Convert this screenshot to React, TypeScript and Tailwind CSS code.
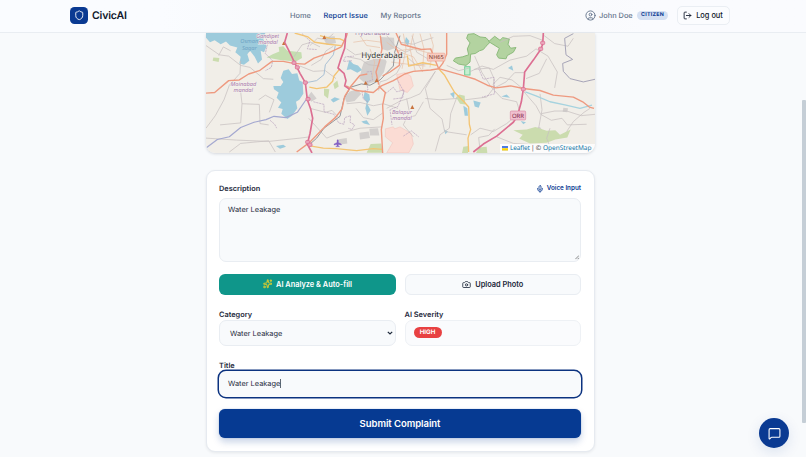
import { Camera, CircleUser, LogOut, MessageSquare, Mic, Shield, Sparkles } from "lucide-react";

const navItems = [
  { label: "Home", active: false },
  { label: "Report Issue", active: true },
  { label: "My Reports", active: false },
];

const lakes = [
  "M18 12H196L190 32L200 52L192 70L182 66L186 92L174 104L164 84L150 66L142 76L148 96L132 108L118 104L122 84L106 70L112 56L90 50L78 38L62 46L44 34L30 40L18 26Z",
  "M250 126L266 122L276 136L292 134L298 156L308 160L310 196L298 214L288 220L292 240L276 262L262 272L244 256L248 242L234 238L244 222L230 208L236 192L222 182L220 172L242 172L250 160L242 148Z",
  "M448 94L460 106L474 110L486 124L472 132L452 122L440 124Z",
  "M494 190L508 198L510 214L502 226L512 246L502 262L496 240L500 222L490 208Z",
  "M392 214L404 206L420 212L400 222Z",
  "M228 354L250 350L258 356L240 362Z",
  "M484 280L500 276L510 290L492 286Z",
  "M618 24L628 36L624 52L614 40Z",
  "M790 232L802 240L804 262L794 262Z",
  "M820 216L842 222L836 238L824 234Z",
  "M904 204L920 198L930 208Z",
  "M750 196L764 190L762 210Z",
  "M962 278L978 282L970 288Z",
  "M732 304L744 310L736 318Z",
  "M924 118L936 110L940 126Z",
];

const forests = [
  "M200 86L218 76L238 68L236 54L250 52L262 66L304 70L306 88L288 98L240 94Z",
  "M804 16L822 14L840 24L858 26L870 40L858 52L850 62L838 66L826 74L812 76L810 100L798 110L776 106L760 96L766 88L788 84L806 78L802 60L810 42L800 28Z",
  "M866 38L884 22L900 34L908 26L928 30L924 46L932 58L948 56L940 70L922 80L918 90L896 88L890 78L898 58L882 48Z",
];

const fields = [
  "M940 306L980 304L1006 296L1040 308L1066 306L1080 320L1112 304L1102 328L1066 334L1040 344L990 346L958 332L968 320Z",
  "M768 206L778 198L794 202L796 228L780 226Z",
  "M372 180L388 182L384 210L372 200Z",
  "M400 166L412 156L416 174L404 182Z",
  "M512 348L544 346L548 374H500Z",
  "M790 356L806 354L804 375H786Z",
  "M836 358L860 356L862 375H828Z",
  "M40 86L58 88L56 100L38 96Z",
];

const urban = [
  "M504 96L526 90L556 92L560 98L552 130L534 156L500 168L478 150L486 116L492 100Z",
  "M540 24L582 26L584 58L562 66L544 60Z",
  "M448 190L470 182L484 196L464 218L440 222L434 208Z",
  "M334 190L350 210L334 220L322 206Z",
  "M508 302L534 300L538 322L510 322Z",
  "M478 314L506 310L510 330L480 334Z",
  "M412 334L440 330L442 346L416 350Z",
  "M1004 300L1020 296L1028 308L1008 314Z",
  "M1090 238L1104 240L1102 252L1088 250Z",
  "M368 24L404 22L408 42L380 48Z",
];

const military = [
  "M590 138L614 132L632 142L640 172L622 192L600 184Z",
  "M556 302L580 296L584 302L600 296L634 316L640 348L626 375H560L578 344L556 326Z",
];

// Thin local streets around the city
const minorRoads = [
  "M18 50L58 78L86 82L122 110L150 116L190 150L220 152",
  "M18 300L46 262L72 214L88 170L120 134L122 96",
  "M56 80L70 54L92 66",
  "M122 190L126 226L178 228L180 286L206 290",
  "M60 290L122 284L126 226",
  "M18 330L110 336L206 340L300 330L330 326",
  "M88 372L122 346L206 338L226 372",
  "M208 252L222 214L196 200L176 214",
  "M330 240L376 252L396 246L418 270",
  "M326 270L380 330L410 318L480 300L546 296",
  "M334 110L364 92L378 66L400 52",
  "M300 112L340 128L376 126L408 150",
  "M282 84L306 48L332 40L360 54",
  "M440 226L480 222L520 232L550 226L594 240",
  "M468 240L490 268L520 274L548 254",
  "M560 240L600 218L632 208L660 196L706 128",
  "M620 210L628 250L610 290L640 326",
  "M706 128L676 180L690 240L726 272L734 310L800 320",
  "M770 208L752 256L748 300L720 320L706 370",
  "M796 214L860 206L880 180L882 150L868 118L822 122",
  "M808 130L846 112L880 122L930 94L980 82L1008 60",
  "M870 170L846 132L824 82",
  "M868 170L906 210L950 220L960 252L920 286L880 310L840 300L812 320",
  "M880 180L918 160L944 132L972 132",
  "M970 182L936 154L900 146L878 168",
  "M972 190L1008 232L1022 258L1054 276L1086 270L1102 290L1160 288",
  "M1020 196L1026 244L1016 300",
  "M1024 256L1064 248L1100 248L1144 262L1185 258",
  "M1100 310L1120 280L1152 252L1170 240",
  "M1008 60L1044 82L1072 130L1064 178",
  "M1030 18L1064 44L1104 52L1120 28",
  "M1040 90L1018 134L978 150",
  "M1050 300L1040 330L1056 372",
  "M884 302L866 322L836 328L840 366",
  "M890 326L940 346L1000 350L1060 364",
  "M670 220L646 262L614 270",
  "M676 210L720 214L770 210",
  "M900 40L940 22L990 20L1028 34",
  "M536 186L540 160L560 154L590 134L606 104",
  "M330 50L352 28L380 32L400 14",
  "M440 60L466 78L500 72L526 88",
  "M444 84L482 92L506 108L540 112",
  "M560 20L586 52L616 70L640 60",
  "M636 20L650 70L690 94L732 92",
  "M600 40L640 46L666 36L700 26",
  "M590 90L620 84L650 110L690 104",
  "M740 110L776 126L808 118",
];

const boundaries = [
  "M190 14L204 40L196 74L218 96L214 116L196 126",
  "M306 14L330 36L322 60L350 62",
  "M340 220L372 228L372 250L402 258L416 284L432 288L434 268L452 262L450 282L464 290L456 304L444 300",
  "M590 150L612 190L594 234L570 244L576 290",
  "M210 276L224 288L230 300",
  "M456 96L430 98L436 84L462 82",
  "M500 130L514 128L518 154L500 160L504 184L486 190L490 212L504 220",
  "M556 196L580 176L590 190L612 184L608 208L578 212",
  "M836 120L850 152L882 146L884 196L846 206",
  "M610 324L634 308L656 326",
];

// Dense inner-city streets
const cityRoads = [
  "M560 40L600 70L640 84L668 130",
  "M574 100L620 106L676 112",
  "M610 14L618 60L606 120",
  "M640 14L630 60L646 128",
  "M660 14L672 60L668 122",
  "M590 66L640 60L700 76",
  "M480 20L500 50L540 56",
  "M460 40L500 34L546 40",
  "M510 60L524 100L516 150",
  "M690 14L700 50L690 116",
];

const primaryRoads = [
  "M18 194L44 192L86 156L118 154L146 136L178 126L216 98L250 98L280 104L314 106L342 88L386 72L424 54",
  "M424 54L440 20L442 12",
  "M290 372L330 342L374 296L406 268L426 242L434 204L452 174L470 152L480 140L502 136",
  "M438 172L468 186L520 192L544 172L580 156L614 136L640 128L692 124L716 120",
  "M536 172L556 192L548 230L550 270L544 304L548 375",
  "M540 12L546 60L538 100L528 130L536 168",
  "M588 12L604 46L664 62L692 60L716 120",
  "M740 12V76L728 104L716 120",
  "M716 120L780 138L826 152L862 170L888 178L932 172L970 180L1020 186L1060 200L1120 206L1148 220L1168 236L1182 240",
  "M586 52L600 84L598 110L570 130L548 142",
];

const yellowRoads = [
  "M284 12L324 24L344 40L386 46L424 50",
  "M328 176L350 180L380 176L398 158L402 142L420 120",
  "M334 354L370 360L408 362L470 368L520 362L546 364",
  "M716 120L734 140L750 168L764 192L792 220L806 236L808 288L812 304L804 330L806 372",
  "M622 80L626 112L668 102L710 110",
  "M360 20L390 28L420 30L438 38",
];

const motorways = [
  "M262 12L254 40L270 72L284 102L300 134L316 162L322 214L332 242L338 270L330 316L322 348L336 375",
  "M438 12L434 58L422 92L414 118L432 134L438 156L434 172L448 182",
  "M1030 12L1028 46L1022 62L1000 94L974 130L970 182L964 220L952 264L940 282L890 324L850 348L820 372",
];

const junctions = [
  [282, 102],
  [292, 116],
  [316, 162],
  [324, 212],
  [323, 342],
  [330, 350],
  [1028, 42],
  [1022, 60],
  [970, 182],
];

function MapView() {
  return (
    <svg viewBox="18 12 1167 363" preserveAspectRatio="none" className="block h-full w-full" fill="none">
      <rect x="18" y="12" width="1167" height="363" fill="#f1eee8" />
      <g fill="#fbdcd4" stroke="#f0c0b8" strokeWidth="1.5">
        {military.map((d) => (
          <path key={d} d={d} />
        ))}
      </g>
      <g fill="#d3d0ce">
        {urban.map((d) => (
          <path key={d} d={d} />
        ))}
      </g>
      <g fill="#cbdcae">
        {fields.map((d) => (
          <path key={d} d={d} />
        ))}
      </g>
      <g fill="#b3d3a0" stroke="#8cba7c" strokeWidth="3" strokeLinejoin="round">
        {forests.map((d, i) => (
          <path key={d} d={d} strokeOpacity={i === 0 ? 0 : 1} fill={i === 0 ? "#c5deb0" : undefined} />
        ))}
      </g>
      <rect x="794" y="114" width="16" height="25" fill="#c5f0d0" stroke="#6fcf97" strokeWidth="3" />
      <g fill="#9dcbdc">
        {lakes.map((d) => (
          <path key={d} d={d} />
        ))}
      </g>
      <g stroke="#c6c0c0" strokeWidth="2.2" strokeLinejoin="round">
        {minorRoads.map((d) => (
          <path key={d} d={d} />
        ))}
      </g>
      <g stroke="#b9a3bd" strokeWidth="2" strokeDasharray="7 2">
        {boundaries.map((d) => (
          <path key={d} d={d} />
        ))}
      </g>
      <g stroke="#e6bfa6" strokeWidth="2" strokeLinejoin="round">
        {cityRoads.map((d) => (
          <path key={d} d={d} />
        ))}
      </g>
      {/* Rivers and railway */}
      <g strokeLinejoin="round">
        <path d="M18 360L52 334L88 326L122 298L162 282L198 274L222 264L258 268L292 252L318 214" stroke="#a4a8d0" strokeWidth="3.5" />
        <path d="M320 162L350 156L372 138L376 108L400 78L406 50" stroke="#a8bfd4" strokeWidth="3" />
        <path d="M976 190L1008 202L1050 220L1098 230L1140 240L1176 230" stroke="#a6d3df" strokeWidth="4" />
        <path d="M328 350L350 330L372 300L420 264L432 210L452 176L484 166L510 170L540 154L580 112L584 70L600 20" stroke="#909499" strokeWidth="3" />
        <path d="M1120 14L1094 28L1098 78L1118 92L1088 104L1090 128L1110 150L1150 160L1185 152" stroke="#a5a3b6" strokeWidth="3" />
      </g>
      <g stroke="#f3c473" strokeWidth="4" strokeLinejoin="round">
        {yellowRoads.map((d) => (
          <path key={d} d={d} />
        ))}
      </g>
      <g stroke="#ee9a80" strokeWidth="4.2" strokeLinejoin="round">
        {primaryRoads.map((d) => (
          <path key={d} d={d} />
        ))}
      </g>
      <g stroke="#dc6f92" strokeWidth="5" strokeLinejoin="round">
        {motorways.map((d) => (
          <path key={d} d={d} />
        ))}
      </g>
      {junctions.map(([x, y]) => (
        <rect key={`${x}-${y}`} x={x - 6} y={y - 5} width="12" height="10" rx="3" fill="#eaa5ba" stroke="#dc6f92" strokeWidth="2.5" />
      ))}
      {/* Peaks */}
      <g fill="#c9743f">
        <path d="M246 48L251 38L256 48Z" />
        <path d="M367 30L373 19L379 30Z" />
        <path d="M491 168L497 157L503 168Z" />
        <path d="M524 160L530 149L536 160Z" />
        <path d="M631 242L637 230L643 242Z" />
      </g>
      <path
        d="M411 336Q413 334 415 336V343L424 348V351L415 349V353L419 356H407L411 353V349L402 351V348L411 343Z"
        fill="#8461c4"
        stroke="#8461c4"
      />
      <g className="font-['Noto_Sans','Open_Sans',sans-serif]" textAnchor="middle" stroke="#f6f3ee" strokeWidth="3" paintOrder="stroke">
        <g fontSize="17" fontStyle="italic" fill="#a577ab">
          <text x="203" y="27">Gandipet</text>
          <text x="204" y="46">mandal</text>
          <text x="130" y="172">Moinabad</text>
          <text x="130" y="191">mandal</text>
          <text x="606" y="256">Balapur</text>
          <text x="606" y="275">mandal</text>
        </g>
        <g fontSize="17" fontStyle="italic" fill="#6fa3c4" stroke="none">
          <text x="148" y="43">Osman</text>
          <text x="148" y="62">Sagar</text>
        </g>
        <text x="517" y="19" fontSize="20" fill="#9a7aa8">
          Hyderabad
        </text>
        <text x="546" y="89" fontSize="24" fill="#333">
          Hyderabad
        </text>
      </g>
      <g className="font-['Noto_Sans','Open_Sans',sans-serif]" textAnchor="middle">
        <rect x="682" y="73" width="53" height="24" rx="3" fill="#f9ccc0" stroke="#eda591" strokeWidth="2" />
        <text x="709" y="91" fontSize="17" fill="#7a3b2e">
          NH65
        </text>
        <rect x="931" y="248" width="46" height="27" rx="3" fill="#f0c0cf" stroke="#d98aa6" strokeWidth="2" />
        <text x="954" y="268" fontSize="18" fill="#7d2548">
          ORR
        </text>
      </g>
    </svg>
  );
}

function Attribution() {
  return (
    <div className="absolute right-0 bottom-0 flex h-[9.5px] items-center rounded-br-[8px] bg-white/85 pr-[3px] pl-[2px] font-['Noto_Sans',sans-serif] text-[6.5px] leading-none whitespace-nowrap text-[#444]">
      <svg viewBox="0 0 12 8" className="mr-[1.5px] h-[4.5px] w-[6.5px]">
        <path fill="#4C7BE1" d="M0 0h12v4H0z" />
        <path fill="#FFD500" d="M0 4h12v3H0z" />
        <path fill="#E0BC00" d="M0 7h12v1H0z" />
      </svg>
      <span className="tracking-[-0.1px] text-[#1078a8]">Leaflet</span>
      <span className="mx-[1.2px]">|</span>
      <span className="mr-[1.8px]">©</span>
      <span className="text-[#1078a8]">OpenStreetMap</span>
    </div>
  );
}

function Header() {
  return (
    <header className="relative flex h-[33px] items-center border-b border-[#e9edf2] bg-[#f9fafc] bg-linear-to-r from-[#fafcff] from-20% via-[#f6f7f8] via-50% to-[#fafbfe] to-80% pb-px">
      <div className="flex w-[220px] items-center pl-[70px]">
        <div className="flex h-[17.5px] w-[17.5px] items-center justify-center rounded-[4.5px] bg-[#0a3a92]">
          <Shield className="h-[10.5px] w-[10.5px] text-white" strokeWidth={2} />
        </div>
        <span className="ml-[4.5px] pt-px text-[10.6px] font-semibold tracking-[-0.2px] text-[#0f172a]">CivicAI</span>
      </div>
      <nav className="ml-[70px] flex w-[294.5px] gap-[12.7px] pt-px text-[7.4px] font-medium text-[#64748b]">
        {navItems.map((item) => (
          <a key={item.label} className={item.active ? "text-[#0a3a92]" : ""}>
            {item.label}
          </a>
        ))}
      </nav>
      <div className="flex items-center text-[7.4px] font-medium text-[#64748b]">
        <CircleUser className="h-[11px] w-[11px]" strokeWidth={2} />
        <span className="ml-[3.5px] w-[38px] pt-px whitespace-nowrap">John Doe</span>
        <span className="flex h-[9px] w-[31px] items-center justify-center rounded-full bg-[#d5e0f2] pt-px text-[5.3px] leading-none font-bold tracking-[0.25px] text-[#0a3a92]">
          CITIZEN
        </span>
        <button className="ml-[8.5px] flex h-[19px] w-[53px] items-center justify-center rounded-[5px] border border-[#eaeef3] bg-[#fbfcfe] text-[#0f172a]">
          <LogOut className="mr-[4px] h-[9px] w-[9px]" strokeWidth={2.3} />
          <span className="pt-px whitespace-nowrap">Log out</span>
        </button>
      </div>
    </header>
  );
}

function ReportForm() {
  return (
    <form className="mt-[17px] flex h-[281.5px] flex-col rounded-[9px] border border-[#e6eaf0] bg-white px-[12.5px] pt-[12px] text-[7.4px] text-[#1e293b] shadow-[0_1px_3px_rgba(15,23,42,0.08)]">
      <div className="flex h-[11px] items-center justify-between">
        <label className="font-semibold">Description</label>
        <button type="button" className="flex items-center text-[6.3px] font-semibold text-[#0a3a92]">
          <Mic className="mr-[2.5px] h-[8px] w-[8px]" strokeWidth={2.4} />
          <span className="pt-px">Voice Input</span>
        </button>
      </div>

      <div className="relative mt-[3.5px] h-[64px] shrink-0 rounded-[7px] border border-[#e9edf2] bg-[#f8fafc] px-[8px] pt-[5.5px] leading-[12px]">
        Water Leakage
        <svg viewBox="0 0 6 6" className="absolute right-[1px] bottom-[1px] h-[4.5px] w-[4.5px]" stroke="#555" strokeWidth="0.9">
          <path d="M0.5 5.5L5.5 0.5M3.5 5.5L5.5 3.5" />
        </svg>
      </div>

      <div className="mt-[12px] grid shrink-0 grid-cols-2 gap-[9px] font-semibold">
        <button type="button" className="flex h-[21px] items-center justify-center rounded-[6px] bg-[#0f968a] text-white">
          <Sparkles className="mr-[4px] h-[9.5px] w-[9.5px] text-[#c3c638]" strokeWidth={2.8} />
          <span className="pt-px">AI Analyze &amp; Auto-fill</span>
        </button>
        <button type="button" className="flex h-[21px] items-center justify-center rounded-[6px] border border-[#e9edf2] bg-[#f8fafc]">
          <Camera className="mr-[4px] h-[9px] w-[9px]" strokeWidth={2.2} />
          <span className="pt-px">Upload Photo</span>
        </button>
      </div>

      <div className="mt-[14px] grid shrink-0 grid-cols-2 gap-[9px]">
        <div>
          <label className="block h-[11px] leading-[11px] font-semibold">Category</label>
          <div className="flex h-[26px] items-center justify-between rounded-[7px] border border-[#e9edf2] bg-[#f8fafc] pr-[1.5px] pl-[10px]">
            <span className="pt-[2px]">Water Leakage</span>
            <svg viewBox="0 0 6 4" className="h-[4px] w-[6px]" fill="none" stroke="#1e293b" strokeWidth="1.2">
              <path d="M0.8 0.8L3 3L5.2 0.8" />
            </svg>
          </div>
        </div>
        <div>
          <label className="block h-[11px] leading-[11px] font-semibold">AI Severity</label>
          <div className="flex h-[26px] items-center rounded-[7px] border border-[#eef1f5] bg-[#fafbfd] pl-[8px]">
            <span className="flex h-[11px] w-[28px] items-center justify-center rounded-full bg-[#e84142] pt-px text-[6.2px] leading-none font-bold text-white">
              HIGH
            </span>
          </div>
        </div>
      </div>

      <label className="mt-[14px] block h-[11px] shrink-0 leading-[11px] font-semibold">Title</label>
      <div className="flex h-[26px] shrink-0 items-center rounded-[7px] bg-[#f8fafc] pl-[9px] ring-[1.5px] ring-[#0c3380]">
        <span className="pt-px">Water Leakage</span>
        <span className="h-[9px] w-px bg-[#1e293b]/70" />
      </div>

      <button
        type="button"
        className="mt-[12px] h-[29.5px] shrink-0 rounded-[6px] bg-[#063a92] pt-[2px] text-[9.5px] font-semibold tracking-[-0.05px] text-white shadow-[0_4px_7px_rgba(10,58,146,0.22),0_0_1px_rgba(10,58,146,0.6)]"
      >
        Submit Complaint
      </button>
    </form>
  );
}

export default function App() {
  return (
    <div className="relative h-[457px] w-[806px] overflow-hidden bg-[#f8fafc] font-['Inter',sans-serif] leading-normal [text-rendering:geometricPrecision]">
      <Header />
      <main className="ml-[205.5px] w-[389px]">
        <div className="relative h-[120px] overflow-hidden rounded-b-[9px] shadow-[0_1px_3px_rgba(15,23,42,0.15)]">
          <MapView />
          <Attribution />
        </div>
        <ReportForm />
      </main>

      <div className="absolute top-[100px] right-0 h-[323px] w-[4.5px] rounded-[1px] bg-[#c5ced6]" />
      <button className="absolute top-[418px] left-[759px] flex h-[30px] w-[30px] items-center justify-center rounded-full bg-[#0a3a92] shadow-[0_4px_14px_rgba(10,58,146,0.12)]">
        <MessageSquare className="h-[13px] w-[13px] text-white" strokeWidth={2} />
      </button>
    </div>
  );
}
